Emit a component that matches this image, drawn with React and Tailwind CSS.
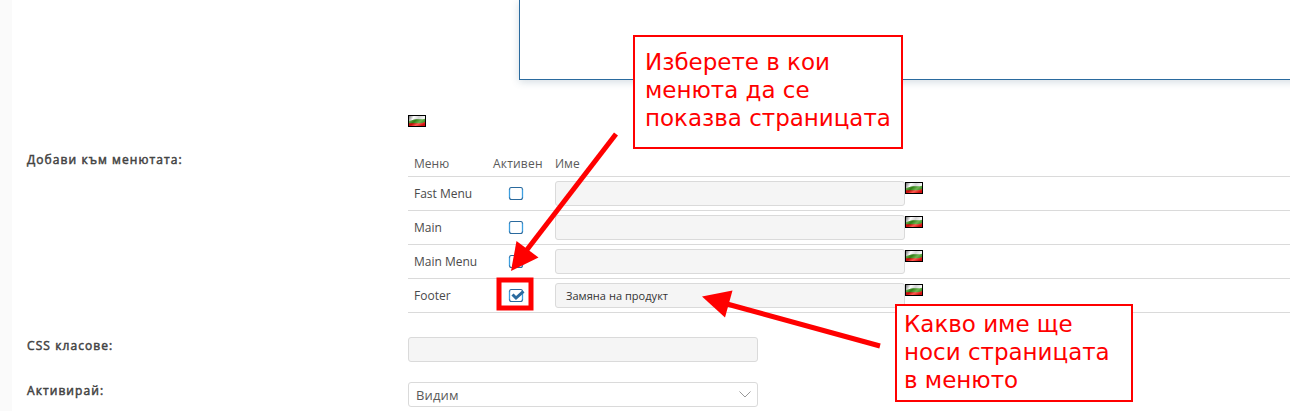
import clsx from "clsx";

const menus = [
  { name: "Fast Menu", active: false, title: "" },
  { name: "Main", active: false, title: "" },
  { name: "Main Menu", active: false, title: "" },
  { name: "Footer", active: true, title: "Замяна на продукт" },
];

const Flag = ({ className }) => (
  <svg className={clsx("block shrink-0", className)} width="18" height="12" viewBox="0 0 18 12">
    <defs>
      <linearGradient id="flagWhite" x1="0" y1="0" x2="1" y2="0.3">
        <stop offset="0" stopColor="#777" />
        <stop offset="0.3" stopColor="#ffffff" />
        <stop offset="0.6" stopColor="#d4d4d4" />
        <stop offset="1" stopColor="#ffffff" />
      </linearGradient>
      <linearGradient id="flagGreen" x1="0" y1="0" x2="1" y2="0.5">
        <stop offset="0" stopColor="#8fc878" />
        <stop offset="0.4" stopColor="#2f7d12" />
        <stop offset="0.7" stopColor="#6db552" />
        <stop offset="1" stopColor="#3a8a20" />
      </linearGradient>
      <linearGradient id="flagRed" x1="0" y1="0" x2="1" y2="0.4">
        <stop offset="0" stopColor="#e01010" />
        <stop offset="0.35" stopColor="#c80c0c" />
        <stop offset="0.65" stopColor="#ff5a50" />
        <stop offset="1" stopColor="#d01010" />
      </linearGradient>
    </defs>
    <rect width="18" height="12" fill="#000" />
    <rect x="1" y="1" width="16" height="10" fill="url(#flagWhite)" />
    <path d="M1 6C4 5.6 5 4.2 8 4.2S14 4.6 17 3.8V11H1z" fill="url(#flagGreen)" />
    <path d="M1 8.2C4 8.6 6 8 9 8.2S15 8 17 7V11H1z" fill="url(#flagRed)" />
  </svg>
);

const Checkbox = ({ checked }) => (
  <svg className="block" width="18" height="14" viewBox="0 0 18 14">
    <rect x="1.5" y="0.5" width="13" height="12" rx="2" fill="#fff" />
    <path d="M1.5 2v9M14.5 2v9" stroke="#3d9fe0" strokeWidth="1.3" fill="none" />
    <path d="M1.5 2.5q0-2 2-2h9q2 0 2 2M1.5 10.5q0 2 2 2h9q2 0 2-2" stroke="#2a6a9e" strokeWidth="1.1" fill="none" />
    {checked && <path d="M4.5 5.5L8 9 15.5 2.3" stroke="#2a6a9e" strokeWidth="3" fill="none" />}
  </svg>
);

const Field = ({ value }) => (
  <div className="h-[25px] w-[350px] shrink-0 rounded-[3px] border border-[#dadada] bg-[#f5f5f5] px-[10px] text-[11px] leading-6 tracking-[0.04px] text-[#333]">
    {value}
  </div>
);

const Label = ({ children, className }) => (
  <div className={clsx("w-[381px] shrink-0 text-xs leading-4 tracking-[1.08px] text-[#444] [-webkit-text-stroke:0.5px_#444]", className)}>
    {children}
  </div>
);

const Callout = ({ lines, className }) => (
  <div className={clsx("absolute border-2 border-[#f00] bg-white font-['DejaVu_Sans',sans-serif] leading-7 whitespace-nowrap text-[#f00]", className)}>
    {lines.map((line) => (
      <div key={line}>{line}</div>
    ))}
  </div>
);

export default function App() {
  return (
    <div className="relative flex h-[411px] w-full overflow-hidden bg-white font-['Open_Sans',sans-serif] text-xs text-[#5a5a5a]">
      <div className="w-3 shrink-0 bg-[#fafafa]" />
      <div className="flex min-w-0 grow flex-col pl-[15px]">
        {/* Bottom of the text editor */}
        <div className="-mr-5 ml-[492px] h-20 shrink-0 border-b border-l border-[#2a6a9e] shadow-[0_2px_8px_rgba(42,80,110,0.2)]" />
        <Flag className="mt-[35px] ml-[381px]" />

        {/* Menus */}
        <div className="mt-[23px] flex">
          <Label className="pt-[2px]">Добави към менютата:</Label>
          <div className="grow">
            <div className="flex h-[27px] items-end border-b border-[#dadada] pb-1 pl-[6px]">
              <div className="w-[79px]">Меню</div>
              <div className="w-[62px] tracking-[0.2px]">Активен</div>
              <div>Име</div>
            </div>
            {menus.map((menu) => (
              <div key={menu.name} className="flex h-[34px] items-start border-b border-[#dadada] pt-1 pl-[6px]">
                <div className="w-[94px] leading-[25px] text-[#4a4a4a]">{menu.name}</div>
                <div className="w-[47px] pt-[6px]">
                  <Checkbox checked={menu.active} />
                </div>
                <Field value={menu.title} />
                <Flag className="mt-[1px]" />
              </div>
            ))}
          </div>
        </div>

        <div className="mt-6 flex">
          <Label className="pt-[1px] tracking-[1.2px]">CSS класове:</Label>
          <Field />
        </div>

        <div className="mt-5 flex">
          <Label className="pt-[1px] tracking-[1.2px]">Активирай:</Label>
          <div className="flex h-[25px] w-[350px] items-center justify-between rounded-[3px] border border-[#dadada] bg-white pr-[6px] pl-[7px] text-[13px]">
            <span className="pt-[2px] tracking-[0.15px]">Видим</span>
            <svg width="12" height="7" viewBox="0 0 12 7" fill="none" stroke="#999">
              <path d="M0.5 0.5L6 6 11.5 0.5" />
            </svg>
          </div>
        </div>
      </div>

      {/* Annotations over the form */}
      <svg className="absolute inset-0" width="1290" height="411" viewBox="0 0 1290 411">
        <path d="M616 134L526 251" stroke="#f00" strokeWidth="5" />
        <path d="M511 271L516.5 241L538.5 257.5Z" fill="#f00" />
        <path d="M880 346L727 304" stroke="#f00" strokeWidth="5" />
        <path d="M702 296.5L732.5 290.5L725 317.5Z" fill="#f00" />
        <rect x="499" y="280" width="32" height="28" fill="none" stroke="#f00" strokeWidth="5" />
      </svg>
      <Callout
        className="top-[35px] left-[633px] h-[114px] w-[270px] pt-[11px] pl-[10px] text-[23px] tracking-[-0.02px]"
        lines={["Изберете в кои", "менюта да се", "показва страницата"]}
      />
      <Callout
        className="top-[304px] left-[895px] h-[98px] w-[238px] pt-[4px] pl-[7px] text-[23px] tracking-[-0.02px]"
        lines={["Какво име ще", "носи страницата", "в менюто"]}
      />
    </div>
  );
}
